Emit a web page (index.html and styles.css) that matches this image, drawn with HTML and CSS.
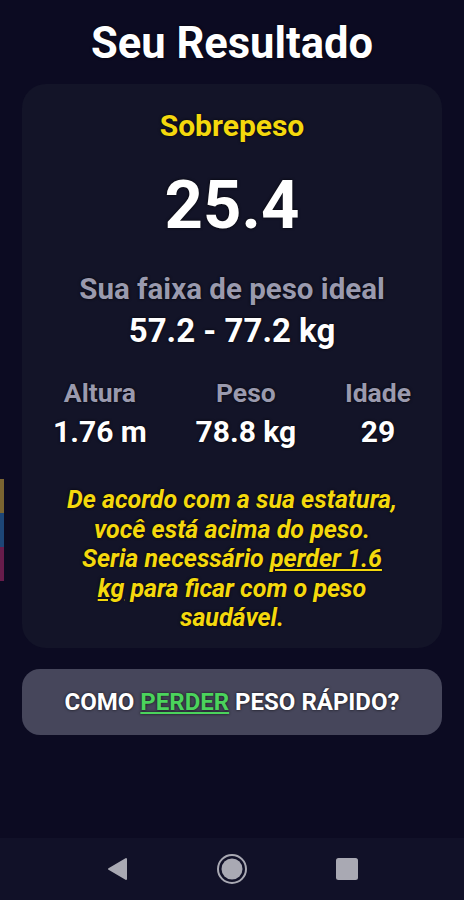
FILE: index.html
```html
<!DOCTYPE html>
<html lang="pt">

<head>
    <meta charset="UTF-8">
    <meta name="viewport" content="width=device-width, initial-scale=1.0">
    <title>Seu Resultado</title>
    <link rel="stylesheet" href="styles.css">
</head>

<body>
    <div class="screen">
        <div class="side-strip">
            <span class="strip gold"></span>
            <span class="strip blue"></span>
            <span class="strip pink"></span>
        </div>

        <h1 class="title">Seu Resultado</h1>

        <div class="content">
            <div class="card">
                <div class="category">Sobrepeso</div>
                <div class="bmi">25.4</div>

                <div class="ideal-label">Sua faixa de peso ideal</div>
                <div class="ideal-value">57.2 - 77.2 kg</div>

                <div class="stats">
                    <div class="stat">
                        <span class="stat-label">Altura</span>
                        <span class="stat-value">1.76 m</span>
                    </div>
                    <div class="stat">
                        <span class="stat-label">Peso</span>
                        <span class="stat-value">78.8 kg</span>
                    </div>
                    <div class="stat">
                        <span class="stat-label">Idade</span>
                        <span class="stat-value">29</span>
                    </div>
                </div>

                <p class="advice">
                    De acordo com a sua estatura,<br>
                    você está acima do peso.<br>
                    Seria necessário <u>perder 1.6<br>kg</u> para ficar com o peso<br>
                    saudável.
                </p>
            </div>

            <button class="tips-btn">COMO <u class="green">PERDER</u> PESO RÁPIDO?</button>
        </div>

        <div class="navbar">
            <svg class="nav-icon" width="22" height="24" viewBox="0 0 22 24">
                <path d="M20 2 L20 22 L3 12 Z" fill="#a9a9b3" stroke="#a9a9b3" stroke-width="2" stroke-linejoin="round" />
            </svg>
            <svg class="nav-icon" width="32" height="32" viewBox="0 0 32 32">
                <circle cx="16" cy="16" r="14" fill="none" stroke="#a9a9b3" stroke-width="2" />
                <circle cx="16" cy="16" r="10.5" fill="#a9a9b3" />
            </svg>
            <svg class="nav-icon" width="22" height="22" viewBox="0 0 22 22">
                <rect x="0" y="0" width="22" height="22" rx="2.5" fill="#a9a9b3" />
            </svg>
        </div>
    </div>
</body>

</html>
```

FILE: styles.css
```css
* {
    margin: 0;
    padding: 0;
    box-sizing: border-box;
}

body {
    background-color: #0c0b22;
    font-family: Roboto, "Liberation Sans", sans-serif;
    color: #ffffff;
}

.screen {
    width: 464px;
    height: 900px;
    position: relative;
    display: flex;
    flex-direction: column;
}

/* strip of colour peeking in at the left edge */
.side-strip {
    position: absolute;
    left: 0;
    top: 479px;
    width: 4px;
    display: flex;
    flex-direction: column;
}

.strip {
    height: 34px;
}

.gold {
    background-color: #7a6431;
}

.blue {
    background-color: #1d4677;
}

.pink {
    background-color: #671c4b;
}

.title {
    font-size: 43.5px;
    font-weight: 700;
    text-align: center;
    line-height: 52px;
    padding-top: 18px;
    height: 84px;
    text-shadow: 0 0 3px rgba(0, 0, 0, 0.8);
}

.content {
    flex: 1;
    padding: 0 22px;
}

.card {
    background-color: #131428;
    border-radius: 24px;
    padding: 24px 31px 18px;
    text-align: center;
    height: 564px;
    text-shadow: 0 0 3px rgba(0, 0, 0, 0.9);
}

.category {
    color: #f4d80d;
    font-size: 30px;
    font-weight: 700;
    line-height: 36px;
}

.bmi {
    font-size: 67px;
    font-weight: 700;
    line-height: 76px;
    margin-top: 23px;
}

.ideal-label {
    color: #9a9aae;
    font-size: 29.5px;
    font-weight: 700;
    line-height: 36px;
    margin-top: 28px;
}

.ideal-value {
    font-size: 33px;
    font-weight: 700;
    line-height: 38px;
    margin-top: 5px;
}

.stats {
    display: flex;
    justify-content: space-between;
    margin-top: 27px;
}

.stat {
    display: flex;
    flex-direction: column;
    align-items: center;
}

.stat-label {
    color: #9a9aae;
    font-size: 26.5px;
    font-weight: 700;
    line-height: 32px;
}

.stat-value {
    font-size: 30px;
    font-weight: 700;
    line-height: 36px;
    margin-top: 5px;
}

.advice {
    color: #f4d80d;
    font-size: 25px;
    font-weight: 700;
    font-style: italic;
    line-height: 29.5px;
    margin-top: 35px;
}

.tips-btn {
    display: block;
    width: 100%;
    height: 66px;
    margin-top: 21px;
    border: none;
    border-radius: 18px;
    background-color: #46465b;
    color: #ffffff;
    font-family: Roboto, "Liberation Sans", sans-serif;
    font-size: 24px;
    font-weight: 700;
    text-shadow: 0 0 3px rgba(0, 0, 0, 0.8);
}

.green {
    color: #4bd35c;
}

.navbar {
    height: 62px;
    background-color: #111128;
    display: flex;
    align-items: center;
    justify-content: center;
    gap: 88px;
}
```
